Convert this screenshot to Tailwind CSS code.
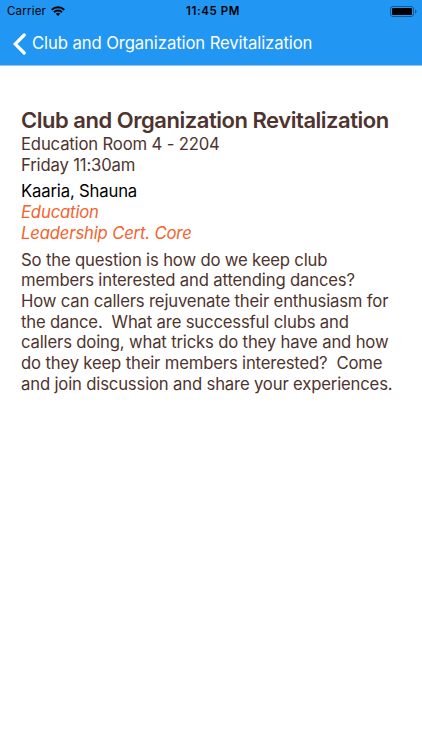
<!DOCTYPE html>
<html lang="en">
<head>
	<meta charset="UTF-8">
	<meta name="viewport" content="width=device-width, initial-scale=1.0">
	<title>Club and Organization Revitalization</title>
	<script src="https://cdn.jsdelivr.net/npm/@tailwindcss/browser@4"></script>
</head>
<body class="bg-white font-['Inter',sans-serif]">
	<header class="h-[66px] bg-[#2196f3] border-b border-[#8ec9f9]">
		<div class="h-[22px] pl-[7px] pr-[5px] grid grid-cols-3 items-center text-[11.5px] text-black">
			<div class="flex items-center gap-[5px]">
				<span class="pt-px tracking-[0.2px]">Carrier</span>
				<svg class="w-[14px] h-[10px]" viewBox="0 0 14 10" fill="none" stroke="#000" stroke-width="2">
					<path d="M.7 3.9a8.9 8.9 0 0 1 12.6 0" />
					<path d="M3 6.2a5.7 5.7 0 0 1 8 0" />
					<path d="M7 10 4.8 7.8a3.1 3.1 0 0 1 4.4 0z" fill="#000" stroke="none" />
				</svg>
			</div>
			<span class="pl-[2px] pt-px text-center font-semibold tracking-[0.6px]">11:45 PM</span>
			<svg class="justify-self-end w-[27px] h-[11px]" viewBox="0 0 27 11">
				<rect x=".5" y=".5" width="23" height="10" rx="2.5" fill="none" stroke="#125a96" />
				<rect x="2" y="2" width="20" height="7" rx=".8" />
				<path d="M25 3.5c2 .6 2 3.4 0 4z" fill="#125a96" />
			</svg>
		</div>
		<div class="h-[44px] pl-[13px] flex items-center gap-[6px] text-white">
			<svg class="w-[13px] h-[22px]" viewBox="0 0 13 22" fill="none" stroke="currentColor" stroke-width="3.2" stroke-linecap="round">
				<path d="M11.2 2 2.2 11l9 9" />
			</svg>
			<h1 class="text-[16.7px] tracking-[-0.11px]">Club and Organization Revitalization</h1>
		</div>
	</header>
	<main class="pt-[41px] px-[21px] text-[16.7px] leading-[20.7px] tracking-[-0.17px] text-[#4e342e] whitespace-nowrap">
		<h2 class="text-[22px] leading-[27px] font-semibold tracking-[-0.47px]">Club and Organization Revitalization</h2>
		<p>Education Room 4 - 2204</p>
		<p>Friday 11:30am</p>
		<p class="mt-[6px] text-black">Kaaria, Shauna</p>
		<p class="italic text-[#f4622d]">Education</p>
		<p class="italic text-[#f4622d]">Leadership Cert. Core</p>
		<p class="mt-[6px] whitespace-pre">So the question is how do we keep club
members interested and attending dances?
How can callers rejuvenate their enthusiasm for
the dance.  What are successful clubs and
callers doing, what tricks do they have and how
do they keep their members interested?  Come
and join discussion and share your experiences.</p>
	</main>
</body>
</html>
